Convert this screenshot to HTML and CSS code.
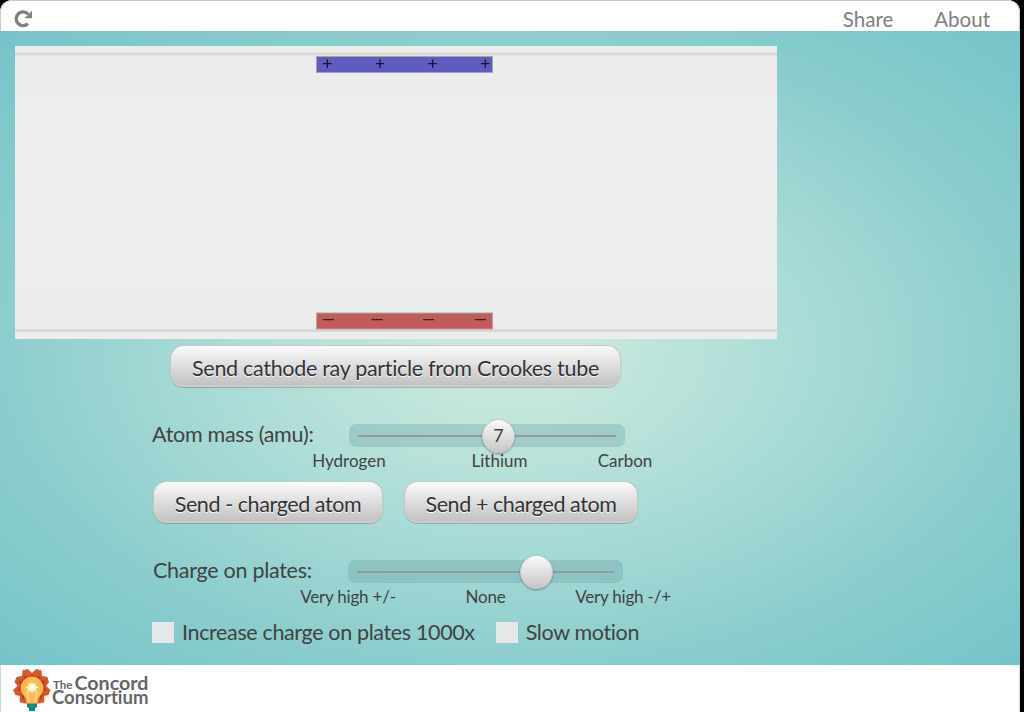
FILE: index.html
```html
<!DOCTYPE html>
<html lang="en">
<head>
<meta charset="utf-8">
<title>Crookes tube</title>
<link rel="stylesheet" href="styles.css">
</head>
<body>
<div class="app">
  <header class="topbar">
    <svg class="reload" width="20" height="20" viewBox="0 0 20 20">
      <path d="M15.200 5.100A6.900 6.900 0 1 0 14.900 14.700" fill="none" stroke="#808080" stroke-width="3.3"/>
      <path d="M19 1.700V9.200H11.500Z" fill="#808080"/>
    </svg>
    <nav class="links"><a class="link share">Share</a><a class="link about">About</a></nav>
  </header>
  <main class="stage">
    <svg class="model" width="762" height="293" viewBox="0 0 762 293">
      <rect width="762" height="293" fill="#ececec"/>
      <rect y="50" width="762" height="193" fill="#ecefee"/>
      <rect y="6.500" width="762" height="3" fill="#d8d8d8"/>
      <rect y="283" width="762" height="3" fill="#d8d8d8"/>
      <rect x="301.5" y="10.5" width="176" height="16" fill="#5f5cc0" stroke="#a5a5ac"/>
      <rect x="301.5" y="267" width="176" height="16" fill="#c05d5c" stroke="#b0a5a8"/>
      <path d="M308 17.7h8.500M312.300 13.500v8.500M360.700 17.700h8.500M365 13.500v8.500M413.300 17.700h8.500M417.600 13.500v8.500M466 17.700h8.500M470.300 13.500v8.500" stroke="#15142f" stroke-width="1.3" fill="none"/>
      <path d="M308 273.600h11M356.500 273.600h11M408 273.600h11M460 273.600h11" stroke="#4b1818" stroke-width="1.400" fill="none"/>
    </svg>
    <section class="controls">
      <button class="btn btn-cathode">Send cathode ray particle from Crookes tube</button>
      <div class="slider-row mass">
        <span class="label">Atom mass (amu):</span>
        <div class="slider">
          <div class="track"><div class="groove"></div><div class="handle">7</div></div>
          <div class="ticks"><span class="tick">Hydrogen</span><span class="tick">Lithium</span><span class="tick">Carbon</span></div>
        </div>
      </div>
      <div class="buttons">
        <button class="btn btn-minus">Send - charged atom</button>
        <button class="btn btn-plus">Send + charged atom</button>
      </div>
      <div class="slider-row charge">
        <span class="label">Charge on plates:</span>
        <div class="slider">
          <div class="track"><div class="groove"></div><div class="handle"></div></div>
          <div class="ticks"><span class="tick">Very high +/-</span><span class="tick">None</span><span class="tick">Very high -/+</span></div>
        </div>
      </div>
      <div class="checks">
        <label class="check check-increase"><span class="box"></span>Increase charge on plates 1000x</label>
        <label class="check"><span class="box"></span>Slow motion</label>
      </div>
    </section>
  </main>
  <footer class="footer">
    <svg class="logo" width="150" height="47" viewBox="0 0 150 47">
      <g fill="#dc5427">
        <path d="M32 8L36 4L41.500 5.500L42 11L47.500 12L49 17.500L46 21L50.500 25L48.500 30L44 31L44.500 37L39 38.500H25L19.500 37L20 31L15.500 30L13 25L17.500 21L14.500 17L16.500 12L22 11L22.500 5.500L28 4Z"/>
      </g>
      <path d="M32 9L35.500 13L40 10.500L40.500 15.500L46 16L43.500 20.500L46.500 25L42.500 27L42 34H22L21.500 27L17.500 25L20.500 20.500L18 16L23.500 15.500L24 10.500L28.500 13Z" fill="#bd3d25"/>
      <path d="M26.500 38.500Q26 33 22.500 29Q19.500 25 21 20Q23.500 12 32 11.500Q40.500 12 43 20Q44.500 25 41.500 29Q38 33 37.500 38.500Z" fill="#f8bd50"/>
      <path d="M29 37L27 26M35 37L37 26" stroke="#fbd78a" stroke-width="1.500"/>
      <path d="M32 16L33.200 19.500L36 18L35.300 21L39 22.500L35.300 24L36 27L33.200 25.500L32 29L30.800 25.500L28 27L28.700 24L25 22.500L28.700 21L28 18L30.800 19.500Z" fill="#fffbe5"/>
      <path d="M27 38.500H37V42L35 43.500V46H29V43.500L27 42Z" fill="#16869a"/>
      <g class="wordmark">
        <text x="53" y="24" font-size="12" textLength="19.500" lengthAdjust="spacingAndGlyphs">The</text>
        <text x="74.500" y="25" font-size="18" textLength="74" lengthAdjust="spacingAndGlyphs">Concord</text>
        <text x="52" y="38.500" font-size="18" textLength="96.500" lengthAdjust="spacingAndGlyphs">Consortium</text>
      </g>
    </svg>
  </footer>
</div>
</body>
</html>
```
FILE: styles.css
```css
* { box-sizing: border-box; }
body { margin: 0; background: #000; font-family: Lato, sans-serif; font-variant-ligatures: none; color: #424242; overflow: hidden; }
.app { width: 1020px; height: 712px; display: flex; flex-direction: column; background: #fff; border-radius: 12px 12px 0 0; }
.topbar { height: 31px; display: flex; justify-content: space-between; padding: 8px 29px 0 13px; border: 1px solid #c8cccc; border-bottom: 0; border-radius: 12px 12px 0 0; background: #fff; }
.reload { display: block; margin-left: -1px; }
.links { display: flex; gap: 41px; margin-top: -3px; }
.link { font-size: 20.5px; line-height: 27px; color: #808080; }
.stage { height: 634px; padding: 15px 0 0 15px; background: radial-gradient(ellipse farthest-corner at center, #c8e8dd 10%, #abdcd7 40%, #8bcdcd 71%, #75c4c9 100%); }
.model { display: block; }
.controls { padding-left: 137px; }
.btn { display: block; height: 42px; padding: 5px 0 0; border: 1px solid #c8c8c8; border-bottom: 2px solid #cfcaca; border-radius: 14px; background: linear-gradient(#fafafa, #c2c2c2); box-shadow: 0 1px 1px rgba(0,0,0,.2); font: 21.5px/34px Lato, sans-serif; letter-spacing: -.42px; color: #333; text-shadow: 0 1px 1px #fff; white-space: nowrap; font-variant-ligatures: none; }
.btn-cathode { width: 451px; margin: 6px 0 0 18px; letter-spacing: -.3px; }
.slider-row { display: flex; height: 52px; }
.mass { margin-top: 32px; }
.charge { margin-top: 32px; }
.label { width: 197px; padding-top: 1px; font-size: 21.5px; line-height: 28px; letter-spacing: -.28px; white-space: nowrap; }
.charge .label { width: 196px; padding-left: 1px; }
.slider { padding-top: 5px; }
.track { width: 276px; height: 23px; padding: 11px 9px; border-radius: 7px; background: rgba(105,160,165,.34); position: relative; }
.charge .track { width: 275px; }
.groove { height: 2px; background: #999; }
.handle { position: absolute; left: 133px; top: -5px; width: 33px; height: 34px; border: 1px solid #c8c8c8; border-radius: 50%; background: linear-gradient(#fafafa, #c6c6c6); box-shadow: 0 1px 2px rgba(0,0,0,.4); text-align: center; font-size: 18px; line-height: 31px; }
.charge .handle { left: 172px; }
.ticks { display: flex; justify-content: space-between; height: 24px; font-size: 17px; line-height: 28px; }
.tick { display: flex; justify-content: center; width: 0; white-space: nowrap; }
.mass .tick:nth-child(2) { margin-left: 25px; }
.charge .tick { letter-spacing: -.2px; }
.buttons { display: flex; gap: 21px; margin: 10px 0 0 1px; }
.btn-minus { width: 230px; }
.btn-plus { width: 234px; }
.checks { display: flex; gap: 21px; margin-top: 11px; }
.check { display: flex; align-items: center; gap: 8px; height: 28px; font-size: 21.5px; letter-spacing: -.36px; white-space: nowrap; }
.box { width: 22px; height: 21px; background: #e6e7e9; }
.footer { height: 47px; border: solid #d4d9d9; border-width: 0 1px; background: #fff; }
.logo { display: block; margin-left: -1px; }
.wordmark { font-family: Lato, sans-serif; font-weight: bold; fill: #666; }
```
